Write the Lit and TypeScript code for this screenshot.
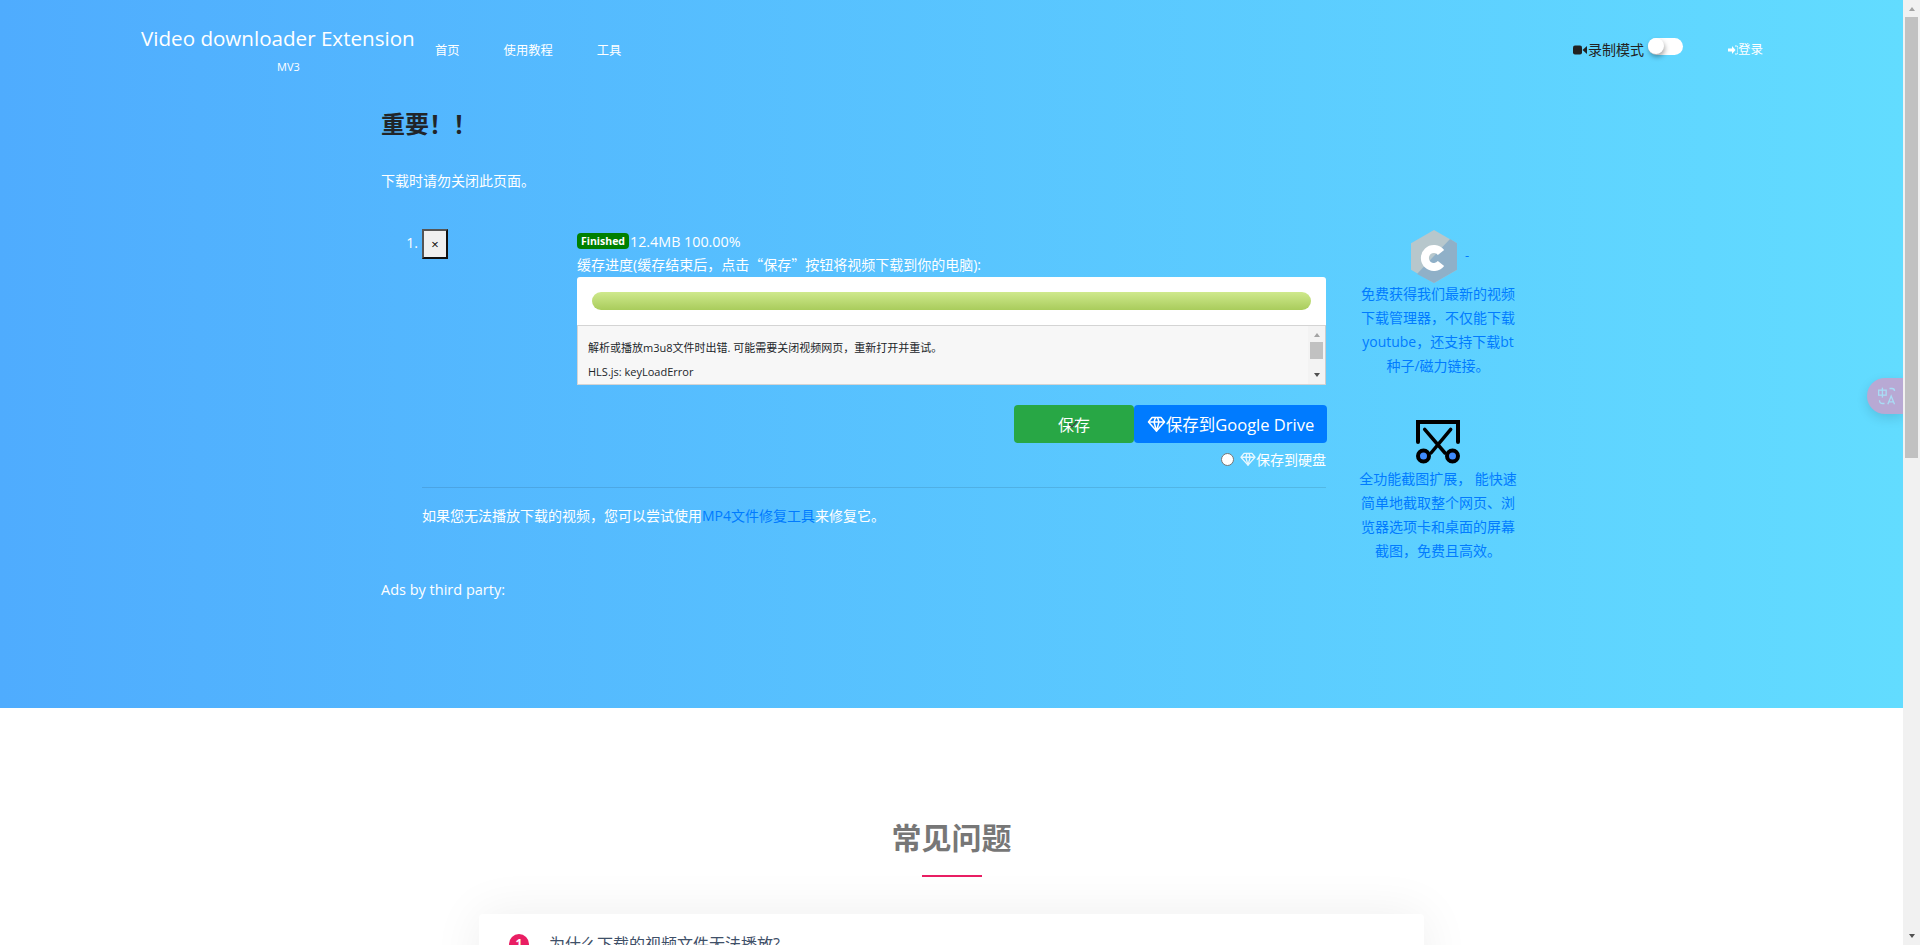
import { LitElement, html, css } from "lit";
import { customElement } from "lit/decorators.js";

const diamond = html`<svg class="gem" viewBox="0 0 18 16" fill="none" stroke="currentColor" stroke-width="1.5" stroke-linejoin="round"><path d="M4.5 1.5h9L17 6l-8 9L1 6z"/><path d="M1 6h16M6.5 6 9 15l2.5-9M6.5 6 8 1.5M11.5 6 10 1.5"/></svg>`;

@customElement("app-root")
export class AppRoot extends LitElement {
  static styles = css`
    :host { display: flex; width: 1920px; height: 945px; overflow: hidden; position: relative;
      font-family: "Open Sans", "Noto Sans CJK SC", sans-serif; font-size: 14px; color: #fff; background: #fff; }
    .page { width: 1903px; height: 945px; flex: none; overflow: hidden; position: relative; }
    .hero { height: 708px; background: linear-gradient(90deg, #4facfe 0%, #62dcff 100%); display: flex; flex-direction: column; }
    .nav { height: 101px; box-sizing: border-box; display: flex; padding: 24px 0 0 141px; flex: none; }
    .brand { width: 294px; flex: none; }
    .brand-name { font-size: 20.6px; line-height: 28px; white-space: nowrap; }
    .brand-sub { font-size: 11px; line-height: 14px; margin: 8px 0 0 136px; }
    .menu { display: flex; gap: 44px; font-size: 12.3px; line-height: 18px; padding-top: 18px; white-space: nowrap; }
    .nav-right { margin-left: auto; display: flex; align-items: flex-start; padding-top: 16px; padding-right: 140px; }
    .rec { display: flex; align-items: center; color: #222; line-height: 20px; font-size: 14px; }
    .rec svg { width: 14px; height: 10px; margin-right: 1px; }
    .toggle { width: 35px; height: 17px; border-radius: 9px; background: #fff; margin: -2px 45px 0 4px; position: relative; }
    .toggle::before { content: ""; position: absolute; left: 0; top: 0; width: 16px; height: 16px; border-radius: 50%; background: #fff; box-shadow: 1px 3px 5px rgba(0,0,0,.35); }
    .login { display: flex; align-items: center; line-height: 20px; font-size: 12.5px; }
    .login svg { width: 10px; height: 10px; }
    .wrap { width: 946px; margin-left: 381px; display: flex; flex-direction: column; }
    h1 { margin: 8px 0 0; font-size: 24px; line-height: 30px; font-weight: 700; color: #212529; }
    .warn { margin: 33px 0 0; font-size: 14px; line-height: 18px; }
    .row { display: flex; margin-top: 39px; }
    .left { width: 945px; flex: none; display: flex; flex-direction: column; }
    .item { display: flex; }
    .num { width: 41px; text-align: right; padding-right: 4px; box-sizing: border-box; font-size: 14px; line-height: 27px; flex: none; }
    .x { width: 26px; height: 30px; box-sizing: border-box; flex: none; border: 2px solid; border-color: #555 #111 #111 #555; background: #f0f0f0; color: #000; font-size: 13px; line-height: 26px; text-align: center; }
    .body { margin-left: 129px; width: 749px; flex: none; }
    .status { display: flex; align-items: center; height: 22px; font-size: 14.3px; white-space: nowrap; margin: 1px 0 2px; }
    .badge { background: green; border-radius: 4px; font-size: 10.5px; font-weight: 700; line-height: 16px; height: 16px; width: 52px; text-align: center; margin-right: 1px; }
    .cap { font-size: 14px; line-height: 20px; margin-bottom: 2px; white-space: nowrap; }
    .q { font-family: "Noto Sans CJK SC", sans-serif; }
    .bar { background: #fff; height: 48px; border-radius: 3px 3px 0 0; padding: 15px 15px 0 15px; box-sizing: border-box; }
    .fill { height: 18px; border-radius: 9px; background: linear-gradient(#cfe98d, #a9cc5c); }
    .log { height: 60px; box-sizing: border-box; background: #f7f7f7; border: 1px solid #d4d4d4; border-right-color: #ccc; display: flex; color: #212529; }
    .log-text { flex: 1; font-size: 11px; padding: 14px 0 0 10px; }
    .log-text div { line-height: 16px; margin-bottom: 8px; white-space: nowrap; }
    .sb { width: 17px; background: #f3f3f3; flex: none; display: flex; flex-direction: column; align-items: center; }
    .tri-up { width: 0; height: 0; border: 3.5px solid transparent; border-top: 0; border-bottom: 4px solid #a3a3a3; margin-top: 7px; }
    .thumb { width: 13px; height: 17px; background: #c1c1c1; margin-top: 5px; }
    .tri-dn { width: 0; height: 0; border: 3.5px solid transparent; border-bottom: 0; border-top: 4px solid #505050; margin-top: auto; margin-bottom: 7px; }
    .btns { display: flex; justify-content: flex-end; margin: 20px -1px 0 0; }
    .btn { height: 38px; box-sizing: border-box; border-radius: 4px; display: flex; align-items: center; justify-content: center; font-size: 16.5px; white-space: nowrap; }
    .save { width: 120px; background: #28a745; font-size: 16px; position: relative; }
    .check { position: absolute; left: 54px; top: 15px; width: 10px; height: 8px; }
    .gd { width: 193px; background: #007bff; }
    .gem { width: 19px; height: 16px; flex: none; }
    .disk { display: flex; justify-content: flex-end; align-items: center; margin-top: 8px; height: 16px; font-size: 14px; color: #fff; }
    .radio { width: 13px; height: 13px; border-radius: 50%; background: #fff; border: 1px solid #767676; box-sizing: border-box; margin-right: 6px; }
    .disk .gem { width: 16px; height: 14px; opacity: .85; }
    hr { border: 0; border-top: 1px solid rgba(0,0,0,.1); margin: 20px 0 0 41px; width: 904px; }
    .tip { margin: 18px 0 0 41px; font-size: 14px; line-height: 20px; white-space: nowrap; }
    a { color: #007bff; text-decoration: none; }
    .ads { margin-top: 53px; font-size: 14.5px; line-height: 21px; }
    .side { width: 160px; margin-left: 32px; flex: none; color: #007bff; text-align: center; font-size: 14px; line-height: 24px; white-space: nowrap; }
    .promo-icon { display: flex; justify-content: center; }
    .a .promo-icon { height: 52px; margin-top: 1px; gap: 8px; padding-left: 4px; }
    .b { margin-top: 42px; }
    .b .promo-icon { height: 47px; }
    .dash { font-size: 13px; line-height: 50px; }
    .faq { background: #fff; height: 237px; display: flex; flex-direction: column; align-items: center; }
    h2 { margin: 108px 0 0; font-size: 30px; line-height: 44px; font-weight: 700; color: #777; }
    .rule { width: 60px; height: 2px; background: #e91e63; margin-top: 15px; flex: none; }
    .card { width: 945px; height: 80px; background: #fff; border-radius: 4px; margin-top: 37px; padding: 20px 0 0 30px; box-sizing: border-box; display: flex; flex: none; color: #3f5068; font-size: 16px; line-height: 20px; box-shadow: 0 0 50px rgba(0,0,0,.07); }
    .circle { width: 20px; height: 20px; border-radius: 50%; background: #e91e63; color: #fff; font-size: 12px; font-weight: 700; display: flex; align-items: center; justify-content: center; margin-right: 20px; }
    .translate { position: absolute; left: 1867px; top: 378px; width: 36px; height: 36px; border-radius: 18px 0 0 18px; background: #b8a9d4; box-shadow: 0 4px 12px rgba(0,0,0,.12); display: flex; align-items: center; justify-content: center; padding-left: 4px; box-sizing: border-box; }
    .translate svg { width: 20px; height: 20px; }
    .scroll { width: 17px; flex: none; height: 945px; background: #f1f1f1; display: flex; flex-direction: column; align-items: center; }
    .scroll .tri-up { margin-top: 7px; }
    .scroll-thumb { width: 13px; height: 441px; background: #c1c1c1; margin-top: 6px; }
    .scroll .tri-dn { margin-bottom: 7px; }
  `;

  render() {
    return html`
      <div class="page">
        <section class="hero">
          <header class="nav">
            <div class="brand">
              <div class="brand-name">Video downloader Extension</div>
              <div class="brand-sub">MV3</div>
            </div>
            <nav class="menu"><span>首页</span><span>使用教程</span><span>工具</span></nav>
            <div class="nav-right">
              <div class="rec">
                <svg viewBox="0 0 14 10" fill="#222"><rect x="0" y="0.5" width="9" height="9" rx="2"/><path d="M9.5 5 14 1v8z"/></svg>录制模式
              </div>
              <div class="toggle"></div>
              <div class="login">
                <svg viewBox="0 0 10 10" fill="#fff"><path d="M0 3.500h4V1l3.500 4L4 9V6.500H0z"/><path d="M7 1h1.500Q10 1 10 2.500v5Q10 9 8.500 9H7" fill="none" stroke="#fff" stroke-width="1"/></svg>登录
              </div>
            </div>
          </header>
          <main class="wrap">
            <h1>重要！！</h1>
            <p class="warn">下载时请勿关闭此页面。</p>
            <div class="row">
              <div class="left">
                <div class="item">
                  <div class="num">1.</div>
                  <div class="x">×</div>
                  <div class="body">
                    <div class="status"><span class="badge">Finished</span>12.4MB 100.00%</div>
                    <div class="cap">缓存进度(缓存结束后，点击<span class="q">“</span>保存<span class="q">”</span>按钮将视频下载到你的电脑):</div>
                    <div class="bar"><div class="fill"></div></div>
                    <div class="log">
                      <div class="log-text">
                        <div>解析或播放m3u8文件时出错. 可能需要关闭视频网页，重新打开并重试。</div>
                        <div>HLS.js: keyLoadError</div>
                      </div>
                      <div class="sb"><div class="tri-up"></div><div class="thumb"></div><div class="tri-dn"></div></div>
                    </div>
                    <div class="btns">
                      <div class="btn save">保存<svg class="check" viewBox="0 0 10 8" fill="none" stroke="#444" stroke-width="1.200"><path d="M1 4l3 3 5-6"/></svg></div>
                      <div class="btn gd">${diamond}保存到Google Drive</div>
                    </div>
                    <div class="disk"><span class="radio"></span>${diamond}保存到硬盘</div>
                  </div>
                </div>
                <hr />
                <div class="tip">如果您无法播放下载的视频，您可以尝试使用<a>MP4文件修复工具</a>来修复它。</div>
                <div class="ads">Ads by third party:</div>
              </div>
              <aside class="side">
                <div class="promo a">
                  <div class="promo-icon">
                    <svg width="46" height="53" viewBox="0 0 46 53"><path d="M23 0 46 13.300v26.400L23 53 0 39.700V13.300z" fill="#b7c7cc"/><path d="M39 9 46 13.300v26.400L23 53 6 44z" fill="#8fb0c8"/><path d="M30 22.500A9 9 0 1 0 30 33.500" fill="none" stroke="#fff" stroke-width="8"/></svg>
                    <span class="dash">-</span>
                  </div>
                  <div>免费获得我们最新的视频<br />下载管理器，不仅能下载<br />youtube，还支持下载bt<br />种子/磁力链接。</div>
                </div>
                <div class="promo b">
                  <div class="promo-icon">
                    <svg width="44" height="44" viewBox="0 0 44 44" fill="none" stroke="#000" stroke-width="3.500" stroke-linecap="round"><path d="M2 22V2h40v20" stroke-width="4"/><path d="M8.700 9.300 29 33M34.700 9.300 15 33"/><circle cx="7.500" cy="36" r="5.500" fill="#3f8cff" stroke-width="4"/><circle cx="36.500" cy="36" r="5.500" fill="#3f8cff" stroke-width="4"/></svg>
                  </div>
                  <div>全功能截图扩展， 能快速<br />简单地截取整个网页、浏<br />览器选项卡和桌面的屏幕<br />截图，免费且高效。</div>
                </div>
              </aside>
            </div>
          </main>
        </section>
        <section class="faq">
          <h2>常见问题</h2>
          <div class="rule"></div>
          <div class="card"><span class="circle">1</span>为什么下载的视频文件无法播放?</div>
        </section>
        <div class="translate">
          <svg viewBox="0 0 24 24" fill="none" stroke="#a9dcf5" stroke-width="1.600"><rect x="2" y="5" width="9" height="6"/><path d="M6.500 2v12"/><path d="M15 3h3q3 0 3 3M3 17q0 4 4 4h2"/><path d="M13 22l4-10 4 10M14.500 19h5"/></svg>
        </div>
      </div>
      <div class="scroll"><div class="tri-up"></div><div class="scroll-thumb"></div><div class="tri-dn"></div></div>
    `;
  }
}
